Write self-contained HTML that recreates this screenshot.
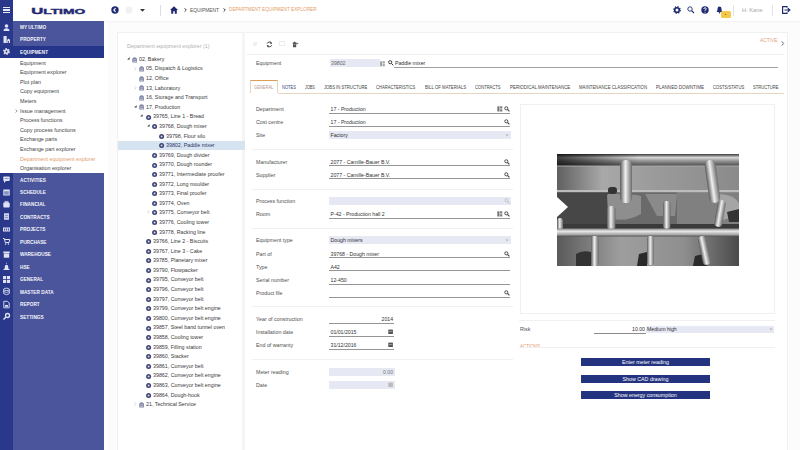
<!DOCTYPE html><html><head><meta charset="utf-8"><style>
*{margin:0;padding:0;box-sizing:border-box}
html,body{width:800px;height:450px;overflow:hidden;background:#fcfcfc;font-family:"Liberation Sans",sans-serif;position:relative}
.a{position:absolute;overflow:visible}
.t{position:absolute;white-space:nowrap;font-size:5.6px;color:#444}
.mm{color:#f4f5fb;font-weight:bold;font-size:5.7px;transform:scaleX(0.83);transform-origin:0 50%}
.sm{color:#444;font-size:5.8px;transform:scaleX(0.925);transform-origin:0 50%}
.tr{color:#333;font-size:5.9px;transform:scaleX(0.9);transform-origin:0 50%}
.lb{color:#505050;font-size:5.3px}
.val{color:#333;font-size:5.2px}
.tab{color:#444;font-size:4.5px}
</style></head><body>
<div class="a" style="left:0;top:0;width:13px;height:450px;background:#2a388c"></div>
<div class="a" style="left:13px;top:0;width:91px;height:450px;background:#4a559b"></div>
<div class="a" style="left:13px;top:0;width:91px;height:21px;background:#fff"></div>
<div class="a" style="left:0;top:46px;width:104px;height:12px;background:#24358a"></div>
<div class="a" style="left:0;top:58px;width:104px;height:115px;background:#fff"></div>
<div class="a" style="left:3px;top:6.8px;width:7.3px;height:1.5px;background:#e8eaf6"></div>
<div class="a" style="left:3px;top:9.2px;width:7.3px;height:1.5px;background:#e8eaf6"></div>
<div class="a" style="left:3px;top:11.6px;width:7.3px;height:1.5px;background:#e8eaf6"></div>
<svg class="a" style="left:0;top:0" width="104" height="21"><text x="31.2" y="13.7" font-family="Liberation Sans" font-weight="bold" fill="#1f2a72" stroke="#1f2a72" stroke-width="0.35" textLength="54" lengthAdjust="spacingAndGlyphs"><tspan font-size="8.2">U</tspan><tspan font-size="6.8">LTIMO</tspan></text></svg>
<div class="t mm" style="left:20px;top:23.00px;line-height:8px;">MY ULTIMO</div>
<svg class="a" style="left:3px;top:23.5px;" width="7" height="7" viewBox="0 0 7 7"><circle cx="3.5" cy="2" r="1.8" fill="#dfe2f3"/><path d="M0.5 7 Q0.5 4.2 3.5 4.2 Q6.5 4.2 6.5 7Z" fill="#dfe2f3"/></svg>
<div class="t mm" style="left:20px;top:35.00px;line-height:8px;">PROPERTY</div>
<svg class="a" style="left:3px;top:35.5px;" width="7" height="7" viewBox="0 0 7 7"><rect x="0.5" y="0" width="3.2" height="7" fill="#dfe2f3"/><path d="M4.2 7 V3.8 L5.6 2.6 L7 3.8 V7Z" fill="#dfe2f3"/><rect x="5.2" y="5" width="0.8" height="2" fill="#2a388c"/></svg>
<div class="t mm" style="left:20px;top:47.60px;line-height:8px;">EQUIPMENT</div>
<svg class="a" style="left:3px;top:48.1px;" width="7" height="7" viewBox="0 0 7 7"><circle cx="3.5" cy="3.5" r="2.5" fill="#dfe2f3"/><circle cx="3.5" cy="3.5" r="2.9" fill="none" stroke="#dfe2f3" stroke-width="1.2" stroke-dasharray="1.52 1.52"/><circle cx="3.5" cy="3.5" r="0.9" fill="#24358a"/></svg>
<div class="t sm" style="left:20px;top:58.50px;line-height:8px;color:#454545">Equipment</div>
<div class="t sm" style="left:20px;top:68.10px;line-height:8px;color:#454545">Equipment explorer</div>
<div class="t sm" style="left:20px;top:77.70px;line-height:8px;color:#454545">Plot plan</div>
<div class="t sm" style="left:20px;top:87.30px;line-height:8px;color:#454545">Copy equipment</div>
<div class="t sm" style="left:20px;top:96.90px;line-height:8px;color:#454545">Meters</div>
<div class="t sm" style="left:20px;top:106.50px;line-height:8px;color:#454545">Issue management</div>
<div class="t sm" style="left:20px;top:116.10px;line-height:8px;color:#454545">Process functions</div>
<div class="t sm" style="left:20px;top:125.70px;line-height:8px;color:#454545">Copy process functions</div>
<div class="t sm" style="left:20px;top:135.30px;line-height:8px;color:#454545">Exchange parts</div>
<div class="t sm" style="left:20px;top:144.90px;line-height:8px;color:#454545">Exchange part explorer</div>
<div class="t sm" style="left:20px;top:154.50px;line-height:8px;color:#e29a6c">Department equipment explorer</div>
<div class="t sm" style="left:20px;top:164.10px;line-height:8px;color:#454545">Organisation explorer</div>
<svg class="a" style="left:15.2px;top:109px;" width="3" height="4" viewBox="0 0 3 4"><path d="M0.7 0.5 L2.2 2 L0.7 3.5" fill="none" stroke="#666" stroke-width="0.7"/></svg>
<div class="t mm" style="left:20px;top:175.50px;line-height:8px;">ACTIVITIES</div>
<svg class="a" style="left:3px;top:176.0px;" width="7" height="7" viewBox="0 0 7 7"><rect x="0.3" y="0.5" width="6.4" height="4.6" rx="0.8" fill="#dfe2f3"/><path d="M1 5 L1 7 L3 5Z" fill="#dfe2f3"/><rect x="1.5" y="2" width="4" height="0.6" fill="#6a74b0"/></svg>
<div class="t mm" style="left:20px;top:187.97px;line-height:8px;">SCHEDULE</div>
<svg class="a" style="left:3px;top:188.5px;" width="7" height="7" viewBox="0 0 7 7"><rect x="0.3" y="0.5" width="6.4" height="6" fill="#dfe2f3"/><rect x="1.2" y="2.2" width="4.6" height="3.5" fill="#8890c0"/></svg>
<div class="t mm" style="left:20px;top:200.44px;line-height:8px;">FINANCIAL</div>
<svg class="a" style="left:3px;top:200.9px;" width="7" height="7" viewBox="0 0 7 7"><rect x="0.3" y="1.5" width="6.4" height="5" rx="1" fill="#dfe2f3"/><rect x="2" y="0.3" width="3" height="1.4" fill="none" stroke="#dfe2f3" stroke-width="0.7"/></svg>
<div class="t mm" style="left:20px;top:212.91px;line-height:8px;">CONTRACTS</div>
<svg class="a" style="left:3px;top:213.4px;" width="7" height="7" viewBox="0 0 7 7"><rect x="1" y="0.2" width="5" height="6.6" fill="#c9cde8"/><rect x="2" y="2" width="3" height="0.6" fill="#6a74b0"/><rect x="2" y="4" width="3" height="0.6" fill="#6a74b0"/></svg>
<div class="t mm" style="left:20px;top:225.38px;line-height:8px;">PROJECTS</div>
<svg class="a" style="left:3px;top:225.9px;" width="7" height="7" viewBox="0 0 7 7"><rect x="0" y="1.5" width="7" height="4" fill="#dfe2f3"/><rect x="1" y="2.5" width="1.2" height="2" fill="#4a559b"/><rect x="3" y="2.5" width="1.2" height="2" fill="#4a559b"/><rect x="5" y="2.5" width="1.2" height="2" fill="#4a559b"/></svg>
<div class="t mm" style="left:20px;top:237.85px;line-height:8px;">PURCHASE</div>
<svg class="a" style="left:3px;top:238.3px;" width="7" height="7" viewBox="0 0 7 7"><path d="M0 0.5 L1.3 0.5 L2.3 4.5 L6 4.5 L6.8 1.5 L1.8 1.5" fill="none" stroke="#dfe2f3" stroke-width="1"/><circle cx="2.6" cy="6" r="0.8" fill="#dfe2f3"/><circle cx="5.4" cy="6" r="0.8" fill="#dfe2f3"/></svg>
<div class="t mm" style="left:20px;top:250.32px;line-height:8px;">WAREHOUSE</div>
<svg class="a" style="left:3px;top:250.8px;" width="7" height="7" viewBox="0 0 7 7"><rect x="0.3" y="0.5" width="6.4" height="1.6" fill="#dfe2f3"/><rect x="0.8" y="2.4" width="5.4" height="4.3" fill="#dfe2f3"/></svg>
<div class="t mm" style="left:20px;top:262.79px;line-height:8px;">HSE</div>
<svg class="a" style="left:3px;top:263.3px;" width="7" height="7" viewBox="0 0 7 7"><path d="M1.5 6 L2 2.5 Q3.5 1 5 2.5 L5.5 6Z" fill="#dfe2f3"/><rect x="0.5" y="6" width="6" height="1" fill="#dfe2f3"/><rect x="3.2" y="-0.3" width="0.6" height="1.2" fill="#dfe2f3"/></svg>
<div class="t mm" style="left:20px;top:275.26px;line-height:8px;">GENERAL</div>
<svg class="a" style="left:3px;top:275.8px;" width="7" height="7" viewBox="0 0 7 7"><rect x="0" y="0" width="3.1" height="3.1" fill="#dfe2f3"/><rect x="3.9" y="0" width="3.1" height="3.1" fill="#dfe2f3"/><rect x="0" y="3.9" width="3.1" height="3.1" fill="#dfe2f3"/><rect x="3.9" y="3.9" width="3.1" height="3.1" fill="#dfe2f3"/></svg>
<div class="t mm" style="left:20px;top:287.73px;line-height:8px;">MASTER DATA</div>
<svg class="a" style="left:3px;top:288.2px;" width="7" height="7" viewBox="0 0 7 7"><ellipse cx="3.5" cy="1.4" rx="2.8" ry="1.2" fill="none" stroke="#dfe2f3" stroke-width="0.9"/><path d="M0.7 1.4 V5.6 Q3.5 7.8 6.3 5.6 V1.4" fill="none" stroke="#dfe2f3" stroke-width="0.9"/><path d="M0.7 3.5 Q3.5 5.5 6.3 3.5" fill="none" stroke="#dfe2f3" stroke-width="0.8"/></svg>
<div class="t mm" style="left:20px;top:300.20px;line-height:8px;">REPORT</div>
<svg class="a" style="left:3px;top:300.7px;" width="7" height="7" viewBox="0 0 7 7"><path d="M0.8 0.3 H4.5 L6.2 2 V6.8 H0.8Z" fill="none" stroke="#dfe2f3" stroke-width="0.9"/><rect x="2" y="4" width="3" height="1.8" fill="#dfe2f3"/></svg>
<div class="t mm" style="left:20px;top:312.67px;line-height:8px;">SETTINGS</div>
<svg class="a" style="left:3px;top:313.2px;" width="7" height="7" viewBox="0 0 7 7"><circle cx="4.5" cy="2.5" r="2" fill="none" stroke="#dfe2f3" stroke-width="1.3"/><path d="M3 4 L0.5 6.5" stroke="#dfe2f3" stroke-width="1.5"/></svg>
<div class="a" style="left:104px;top:0;width:696px;height:21px;background:#fff"></div>
<div class="a" style="left:104px;top:20.5px;width:696px;height:2.5px;background:linear-gradient(#f3f3f3,#fcfcfc)"></div>
<svg class="a" style="left:110.7px;top:6.2px;" width="8" height="8" viewBox="0 0 8 8"><circle cx="4" cy="4" r="3.7" fill="#1f2a72"/><path d="M4.6 2.2 L2.8 4 L4.6 5.8" fill="none" stroke="#fff" stroke-width="1.1"/></svg>
<svg class="a" style="left:125px;top:6.2px;" width="8" height="8" viewBox="0 0 8 8"><circle cx="4" cy="4" r="3.4" fill="#f1f1f1"/></svg>
<svg class="a" style="left:140px;top:9px;" width="5" height="3" viewBox="0 0 5 3"><path d="M0 0 H5 L2.5 2.8Z" fill="#333"/></svg>
<div class="a" style="left:160px;top:5px;width:1px;height:11px;background:#ddd"></div>
<svg class="a" style="left:169.5px;top:6px;" width="8" height="8" viewBox="0 0 8 8"><path d="M4 0.3 L8 4 H6.8 V7.7 H4.8 V5.3 H3.2 V7.7 H1.2 V4 H0Z" fill="#1f2a72"/></svg>
<svg class="a" style="left:183.5px;top:8px;" width="3" height="4" viewBox="0 0 3 4"><path d="M0.6 0.3 L2.3 2 L0.6 3.7" fill="none" stroke="#333" stroke-width="0.95"/></svg>
<div class="t " style="left:190px;top:6.60px;line-height:8px;font-size:4.9px;color:#555">EQUIPMENT</div>
<svg class="a" style="left:222.5px;top:8px;" width="3" height="4" viewBox="0 0 3 4"><path d="M0.6 0.3 L2.3 2 L0.6 3.7" fill="none" stroke="#333" stroke-width="0.95"/></svg>
<div class="t" style="left:229.30px;top:6.40px;line-height:8px;font-size:4.9px;color:#e49c68;transform:scaleX(0.9566);transform-origin:0 0;">DEPARTMENT EQUIPMENT EXPLORER</div>
<svg class="a" style="left:673px;top:6.1px;" width="8" height="8" viewBox="0 0 8 8"><circle cx="4" cy="4" r="2.3" fill="none" stroke="#1f2a72" stroke-width="1.6"/><circle cx="4" cy="4" r="3.2" fill="none" stroke="#1f2a72" stroke-width="1.4" stroke-dasharray="1.25 1.26"/></svg>
<svg class="a" style="left:687px;top:6.1px;" width="8" height="8" viewBox="0 0 8 8"><circle cx="3" cy="3" r="2.2" fill="none" stroke="#1f2a72" stroke-width="0.9"/><path d="M4.6 4.6 L7 7" stroke="#1f2a72" stroke-width="1.1"/></svg>
<svg class="a" style="left:701px;top:6.1px;" width="8" height="8" viewBox="0 0 8 8"><circle cx="4" cy="4" r="3.7" fill="#1f2a72"/><path d="M2.8 3 Q2.8 1.7 4 1.7 Q5.2 1.7 5.2 2.9 Q5.2 3.7 4 4.2 V5" fill="none" stroke="#fff" stroke-width="0.9"/><circle cx="4" cy="6.2" r="0.5" fill="#fff"/></svg>
<svg class="a" style="left:716px;top:5.6px;" width="7" height="8" viewBox="0 0 7 8"><path d="M0.5 6 Q1.5 5 1.5 3 Q1.5 0.6 3.5 0.6 Q5.5 0.6 5.5 3 Q5.5 5 6.5 6Z" fill="#1f2a72"/><circle cx="3.5" cy="6.8" r="0.8" fill="#1f2a72"/></svg>
<div class="a" style="left:720.5px;top:10.5px;width:10.5px;height:7px;border-radius:1.5px;background:#f4c94a"></div>
<div class="a" style="left:725px;top:13.5px;width:1px;height:1px;background:#8a6d10"></div>
<div class="a" style="left:733px;top:5px;width:1px;height:11px;background:#e3e3e3"></div>
<div class="t" style="left:742.30px;top:6.20px;line-height:8px;font-size:5.6px;color:#a8a8a8;transform:scaleX(1.0225);transform-origin:0 0;">H. Kane</div>
<div class="a" style="left:772px;top:5px;width:1px;height:11px;background:#e3e3e3"></div>
<svg class="a" style="left:782px;top:6.1px;" width="9" height="8" viewBox="0 0 9 8"><path d="M5 1.8 V0.6 H0.6 V7.4 H5 V6.2" fill="none" stroke="#1f2a72" stroke-width="1.2"/><path d="M2.5 4 H7.5 M5.8 2.2 L7.8 4 L5.8 5.8" fill="none" stroke="#1f2a72" stroke-width="1.2"/></svg>
<div class="a" style="left:104px;top:22px;width:4px;height:428px;background:#fff"></div>
<div class="a" style="left:117px;top:32px;width:125px;height:418px;background:#fff;border:1px solid #f0f0f0;border-right:none;border-bottom:none"></div><div class="a" style="left:242px;top:32px;width:3px;height:418px;background:#f5f5f5"></div>
<div class="t " style="left:127px;top:41.50px;line-height:8px;font-size:5.3px;color:#b0b0b0">Department equipment explorer (1)</div>
<svg class="a" style="left:127.0px;top:56.9px;" width="3" height="3" viewBox="0 0 3 3"><path d="M2.6 0.2 V2.6 H0.2Z" fill="#333"/></svg>
<svg class="a" style="left:132.4px;top:56.5px;" width="6" height="6" viewBox="0 0 6 6"><path d="M0.3 5.6 V2.2 Q0.3 0.3 2.6 0.3 Q4.9 0.3 4.9 2.2 V5.6Z" fill="#8187a8"/><rect x="1.2" y="2.6" width="2.8" height="0.6" fill="#fff" opacity=".7"/><rect x="1.2" y="4" width="2.8" height="0.6" fill="#fff" opacity=".7"/></svg>
<div class="t tr" style="left:139.4px;top:54.90px;line-height:8px;color:#3a3a3a">02, Bakery</div>
<svg class="a" style="left:133.7px;top:66.5px;" width="3" height="4" viewBox="0 0 3 4"><path d="M0.6 0.3 L2.1 1.8 L0.6 3.3" fill="none" stroke="#bbb" stroke-width="0.6"/></svg>
<svg class="a" style="left:139.1px;top:66.1px;" width="6" height="6" viewBox="0 0 6 6"><path d="M0.3 5.6 V2.2 Q0.3 0.3 2.6 0.3 Q4.9 0.3 4.9 2.2 V5.6Z" fill="#8187a8"/><rect x="1.2" y="2.6" width="2.8" height="0.6" fill="#fff" opacity=".7"/><rect x="1.2" y="4" width="2.8" height="0.6" fill="#fff" opacity=".7"/></svg>
<div class="t tr" style="left:146.1px;top:64.49px;line-height:8px;color:#3a3a3a">05, Dispatch &amp; Logistics</div>
<svg class="a" style="left:139.1px;top:75.7px;" width="6" height="6" viewBox="0 0 6 6"><path d="M0.3 5.6 V2.2 Q0.3 0.3 2.6 0.3 Q4.9 0.3 4.9 2.2 V5.6Z" fill="#8187a8"/><rect x="1.2" y="2.6" width="2.8" height="0.6" fill="#fff" opacity=".7"/><rect x="1.2" y="4" width="2.8" height="0.6" fill="#fff" opacity=".7"/></svg>
<div class="t tr" style="left:146.1px;top:74.08px;line-height:8px;color:#3a3a3a">12, Office</div>
<svg class="a" style="left:133.7px;top:85.7px;" width="3" height="4" viewBox="0 0 3 4"><path d="M0.6 0.3 L2.1 1.8 L0.6 3.3" fill="none" stroke="#bbb" stroke-width="0.6"/></svg>
<svg class="a" style="left:139.1px;top:85.3px;" width="6" height="6" viewBox="0 0 6 6"><path d="M0.3 5.6 V2.2 Q0.3 0.3 2.6 0.3 Q4.9 0.3 4.9 2.2 V5.6Z" fill="#8187a8"/><rect x="1.2" y="2.6" width="2.8" height="0.6" fill="#fff" opacity=".7"/><rect x="1.2" y="4" width="2.8" height="0.6" fill="#fff" opacity=".7"/></svg>
<div class="t tr" style="left:146.1px;top:83.67px;line-height:8px;color:#3a3a3a">13, Laboratory</div>
<svg class="a" style="left:139.1px;top:94.9px;" width="6" height="6" viewBox="0 0 6 6"><path d="M0.3 5.6 V2.2 Q0.3 0.3 2.6 0.3 Q4.9 0.3 4.9 2.2 V5.6Z" fill="#8187a8"/><rect x="1.2" y="2.6" width="2.8" height="0.6" fill="#fff" opacity=".7"/><rect x="1.2" y="4" width="2.8" height="0.6" fill="#fff" opacity=".7"/></svg>
<div class="t tr" style="left:146.1px;top:93.26px;line-height:8px;color:#3a3a3a">16, Storage and Transport</div>
<svg class="a" style="left:133.7px;top:104.8px;" width="3" height="3" viewBox="0 0 3 3"><path d="M2.6 0.2 V2.6 H0.2Z" fill="#333"/></svg>
<svg class="a" style="left:139.1px;top:104.4px;" width="6" height="6" viewBox="0 0 6 6"><path d="M0.3 5.6 V2.2 Q0.3 0.3 2.6 0.3 Q4.9 0.3 4.9 2.2 V5.6Z" fill="#8187a8"/><rect x="1.2" y="2.6" width="2.8" height="0.6" fill="#fff" opacity=".7"/><rect x="1.2" y="4" width="2.8" height="0.6" fill="#fff" opacity=".7"/></svg>
<div class="t tr" style="left:146.1px;top:102.85px;line-height:8px;color:#3a3a3a">17, Production</div>
<svg class="a" style="left:140.4px;top:114.4px;" width="3" height="3" viewBox="0 0 3 3"><path d="M2.6 0.2 V2.6 H0.2Z" fill="#333"/></svg>
<svg class="a" style="left:145.8px;top:114.5px;" width="6" height="6" viewBox="0 0 6 6"><circle cx="2.6" cy="2.6" r="2.5" fill="#3d4476"/><circle cx="2.6" cy="2.6" r="1" fill="#d0d3e6"/></svg>
<div class="t tr" style="left:152.8px;top:112.44px;line-height:8px;color:#3a3a3a">39765, Line 1 - Bread</div>
<svg class="a" style="left:147.0px;top:124.0px;" width="3" height="3" viewBox="0 0 3 3"><path d="M2.6 0.2 V2.6 H0.2Z" fill="#333"/></svg>
<svg class="a" style="left:152.4px;top:124.1px;" width="6" height="6" viewBox="0 0 6 6"><circle cx="2.6" cy="2.6" r="2.5" fill="#3d4476"/><circle cx="2.6" cy="2.6" r="1" fill="#d0d3e6"/></svg>
<div class="t tr" style="left:159.4px;top:122.03px;line-height:8px;color:#3a3a3a">39768, Dough mixer</div>
<svg class="a" style="left:159.1px;top:133.7px;" width="6" height="6" viewBox="0 0 6 6"><circle cx="2.6" cy="2.6" r="2.5" fill="#3d4476"/><circle cx="2.6" cy="2.6" r="1" fill="#d0d3e6"/></svg>
<div class="t tr" style="left:166.1px;top:131.62px;line-height:8px;color:#3a3a3a">39798, Flour silo</div>
<div class="a" style="left:118px;top:140.61px;width:127px;height:9px;background:#d6e3f1"></div>
<svg class="a" style="left:159.1px;top:143.3px;" width="6" height="6" viewBox="0 0 6 6"><circle cx="2.6" cy="2.6" r="2.5" fill="#3d4476"/><circle cx="2.6" cy="2.6" r="1" fill="#d0d3e6"/></svg>
<div class="t tr" style="left:166.1px;top:141.21px;line-height:8px;color:#2a3566">39802, Paddle mixer</div>
<svg class="a" style="left:152.4px;top:152.9px;" width="6" height="6" viewBox="0 0 6 6"><circle cx="2.6" cy="2.6" r="2.5" fill="#3d4476"/><circle cx="2.6" cy="2.6" r="1" fill="#d0d3e6"/></svg>
<div class="t tr" style="left:159.4px;top:150.80px;line-height:8px;color:#3a3a3a">39769, Dough divider</div>
<svg class="a" style="left:152.4px;top:162.5px;" width="6" height="6" viewBox="0 0 6 6"><circle cx="2.6" cy="2.6" r="2.5" fill="#3d4476"/><circle cx="2.6" cy="2.6" r="1" fill="#d0d3e6"/></svg>
<div class="t tr" style="left:159.4px;top:160.39px;line-height:8px;color:#3a3a3a">39770, Dough rounder</div>
<svg class="a" style="left:152.4px;top:172.1px;" width="6" height="6" viewBox="0 0 6 6"><circle cx="2.6" cy="2.6" r="2.5" fill="#3d4476"/><circle cx="2.6" cy="2.6" r="1" fill="#d0d3e6"/></svg>
<div class="t tr" style="left:159.4px;top:169.98px;line-height:8px;color:#3a3a3a">39771, Intermediate proofer</div>
<svg class="a" style="left:152.4px;top:181.7px;" width="6" height="6" viewBox="0 0 6 6"><circle cx="2.6" cy="2.6" r="2.5" fill="#3d4476"/><circle cx="2.6" cy="2.6" r="1" fill="#d0d3e6"/></svg>
<div class="t tr" style="left:159.4px;top:179.57px;line-height:8px;color:#3a3a3a">39772, Long moulder</div>
<svg class="a" style="left:152.4px;top:191.3px;" width="6" height="6" viewBox="0 0 6 6"><circle cx="2.6" cy="2.6" r="2.5" fill="#3d4476"/><circle cx="2.6" cy="2.6" r="1" fill="#d0d3e6"/></svg>
<div class="t tr" style="left:159.4px;top:189.16px;line-height:8px;color:#3a3a3a">39773, Final proofer</div>
<svg class="a" style="left:152.4px;top:200.8px;" width="6" height="6" viewBox="0 0 6 6"><circle cx="2.6" cy="2.6" r="2.5" fill="#3d4476"/><circle cx="2.6" cy="2.6" r="1" fill="#d0d3e6"/></svg>
<div class="t tr" style="left:159.4px;top:198.75px;line-height:8px;color:#3a3a3a">39774, Oven</div>
<svg class="a" style="left:147.0px;top:210.3px;" width="3" height="4" viewBox="0 0 3 4"><path d="M0.6 0.3 L2.1 1.8 L0.6 3.3" fill="none" stroke="#bbb" stroke-width="0.6"/></svg>
<svg class="a" style="left:152.4px;top:210.4px;" width="6" height="6" viewBox="0 0 6 6"><circle cx="2.6" cy="2.6" r="2.5" fill="#3d4476"/><circle cx="2.6" cy="2.6" r="1" fill="#d0d3e6"/></svg>
<div class="t tr" style="left:159.4px;top:208.34px;line-height:8px;color:#3a3a3a">39775, Conveyor belt</div>
<svg class="a" style="left:152.4px;top:220.0px;" width="6" height="6" viewBox="0 0 6 6"><circle cx="2.6" cy="2.6" r="2.5" fill="#3d4476"/><circle cx="2.6" cy="2.6" r="1" fill="#d0d3e6"/></svg>
<div class="t tr" style="left:159.4px;top:217.93px;line-height:8px;color:#3a3a3a">39776, Cooling tower</div>
<svg class="a" style="left:152.4px;top:229.6px;" width="6" height="6" viewBox="0 0 6 6"><circle cx="2.6" cy="2.6" r="2.5" fill="#3d4476"/><circle cx="2.6" cy="2.6" r="1" fill="#d0d3e6"/></svg>
<div class="t tr" style="left:159.4px;top:227.52px;line-height:8px;color:#3a3a3a">39778, Racking line</div>
<svg class="a" style="left:145.8px;top:239.2px;" width="6" height="6" viewBox="0 0 6 6"><circle cx="2.6" cy="2.6" r="2.5" fill="#3d4476"/><circle cx="2.6" cy="2.6" r="1" fill="#d0d3e6"/></svg>
<div class="t tr" style="left:152.8px;top:237.11px;line-height:8px;color:#3a3a3a">39766, Line 2 - Biscuits</div>
<svg class="a" style="left:145.8px;top:248.8px;" width="6" height="6" viewBox="0 0 6 6"><circle cx="2.6" cy="2.6" r="2.5" fill="#3d4476"/><circle cx="2.6" cy="2.6" r="1" fill="#d0d3e6"/></svg>
<div class="t tr" style="left:152.8px;top:246.70px;line-height:8px;color:#3a3a3a">39767, Line 3 - Cake</div>
<svg class="a" style="left:145.8px;top:258.4px;" width="6" height="6" viewBox="0 0 6 6"><circle cx="2.6" cy="2.6" r="2.5" fill="#3d4476"/><circle cx="2.6" cy="2.6" r="1" fill="#d0d3e6"/></svg>
<div class="t tr" style="left:152.8px;top:256.29px;line-height:8px;color:#3a3a3a">39785, Planetary mixer</div>
<svg class="a" style="left:145.8px;top:268.0px;" width="6" height="6" viewBox="0 0 6 6"><circle cx="2.6" cy="2.6" r="2.5" fill="#3d4476"/><circle cx="2.6" cy="2.6" r="1" fill="#d0d3e6"/></svg>
<div class="t tr" style="left:152.8px;top:265.88px;line-height:8px;color:#3a3a3a">39790, Flowpacker</div>
<svg class="a" style="left:145.8px;top:277.6px;" width="6" height="6" viewBox="0 0 6 6"><circle cx="2.6" cy="2.6" r="2.5" fill="#3d4476"/><circle cx="2.6" cy="2.6" r="1" fill="#d0d3e6"/></svg>
<div class="t tr" style="left:152.8px;top:275.47px;line-height:8px;color:#3a3a3a">39795, Conveyor belt</div>
<svg class="a" style="left:145.8px;top:287.2px;" width="6" height="6" viewBox="0 0 6 6"><circle cx="2.6" cy="2.6" r="2.5" fill="#3d4476"/><circle cx="2.6" cy="2.6" r="1" fill="#d0d3e6"/></svg>
<div class="t tr" style="left:152.8px;top:285.06px;line-height:8px;color:#3a3a3a">39796, Conveyor belt</div>
<svg class="a" style="left:145.8px;top:296.8px;" width="6" height="6" viewBox="0 0 6 6"><circle cx="2.6" cy="2.6" r="2.5" fill="#3d4476"/><circle cx="2.6" cy="2.6" r="1" fill="#d0d3e6"/></svg>
<div class="t tr" style="left:152.8px;top:294.65px;line-height:8px;color:#3a3a3a">39797, Conveyor belt</div>
<svg class="a" style="left:145.8px;top:306.3px;" width="6" height="6" viewBox="0 0 6 6"><circle cx="2.6" cy="2.6" r="2.5" fill="#3d4476"/><circle cx="2.6" cy="2.6" r="1" fill="#d0d3e6"/></svg>
<div class="t tr" style="left:152.8px;top:304.24px;line-height:8px;color:#3a3a3a">39799, Conveyor belt engine</div>
<svg class="a" style="left:145.8px;top:315.9px;" width="6" height="6" viewBox="0 0 6 6"><circle cx="2.6" cy="2.6" r="2.5" fill="#3d4476"/><circle cx="2.6" cy="2.6" r="1" fill="#d0d3e6"/></svg>
<div class="t tr" style="left:152.8px;top:313.83px;line-height:8px;color:#3a3a3a">39800, Conveyor belt engine</div>
<svg class="a" style="left:145.8px;top:325.5px;" width="6" height="6" viewBox="0 0 6 6"><circle cx="2.6" cy="2.6" r="2.5" fill="#3d4476"/><circle cx="2.6" cy="2.6" r="1" fill="#d0d3e6"/></svg>
<div class="t tr" style="left:152.8px;top:323.42px;line-height:8px;color:#3a3a3a">39857, Steel band tunnel oven</div>
<svg class="a" style="left:145.8px;top:335.1px;" width="6" height="6" viewBox="0 0 6 6"><circle cx="2.6" cy="2.6" r="2.5" fill="#3d4476"/><circle cx="2.6" cy="2.6" r="1" fill="#d0d3e6"/></svg>
<div class="t tr" style="left:152.8px;top:333.01px;line-height:8px;color:#3a3a3a">39858, Cooling tower</div>
<svg class="a" style="left:145.8px;top:344.7px;" width="6" height="6" viewBox="0 0 6 6"><circle cx="2.6" cy="2.6" r="2.5" fill="#3d4476"/><circle cx="2.6" cy="2.6" r="1" fill="#d0d3e6"/></svg>
<div class="t tr" style="left:152.8px;top:342.60px;line-height:8px;color:#3a3a3a">39859, Filling station</div>
<svg class="a" style="left:145.8px;top:354.3px;" width="6" height="6" viewBox="0 0 6 6"><circle cx="2.6" cy="2.6" r="2.5" fill="#3d4476"/><circle cx="2.6" cy="2.6" r="1" fill="#d0d3e6"/></svg>
<div class="t tr" style="left:152.8px;top:352.19px;line-height:8px;color:#3a3a3a">39860, Stacker</div>
<svg class="a" style="left:145.8px;top:363.9px;" width="6" height="6" viewBox="0 0 6 6"><circle cx="2.6" cy="2.6" r="2.5" fill="#3d4476"/><circle cx="2.6" cy="2.6" r="1" fill="#d0d3e6"/></svg>
<div class="t tr" style="left:152.8px;top:361.78px;line-height:8px;color:#3a3a3a">39861, Conveyor belt</div>
<svg class="a" style="left:145.8px;top:373.5px;" width="6" height="6" viewBox="0 0 6 6"><circle cx="2.6" cy="2.6" r="2.5" fill="#3d4476"/><circle cx="2.6" cy="2.6" r="1" fill="#d0d3e6"/></svg>
<div class="t tr" style="left:152.8px;top:371.37px;line-height:8px;color:#3a3a3a">39862, Conveyor belt engine</div>
<svg class="a" style="left:145.8px;top:383.1px;" width="6" height="6" viewBox="0 0 6 6"><circle cx="2.6" cy="2.6" r="2.5" fill="#3d4476"/><circle cx="2.6" cy="2.6" r="1" fill="#d0d3e6"/></svg>
<div class="t tr" style="left:152.8px;top:380.96px;line-height:8px;color:#3a3a3a">39863, Conveyor belt engine</div>
<svg class="a" style="left:145.8px;top:392.6px;" width="6" height="6" viewBox="0 0 6 6"><circle cx="2.6" cy="2.6" r="2.5" fill="#3d4476"/><circle cx="2.6" cy="2.6" r="1" fill="#d0d3e6"/></svg>
<div class="t tr" style="left:152.8px;top:390.55px;line-height:8px;color:#3a3a3a">39864, Dough-hook</div>
<svg class="a" style="left:133.7px;top:402.1px;" width="3" height="4" viewBox="0 0 3 4"><path d="M0.6 0.3 L2.1 1.8 L0.6 3.3" fill="none" stroke="#bbb" stroke-width="0.6"/></svg>
<svg class="a" style="left:139.1px;top:401.7px;" width="6" height="6" viewBox="0 0 6 6"><path d="M0.3 5.6 V2.2 Q0.3 0.3 2.6 0.3 Q4.9 0.3 4.9 2.2 V5.6Z" fill="#8187a8"/><rect x="1.2" y="2.6" width="2.8" height="0.6" fill="#fff" opacity=".7"/><rect x="1.2" y="4" width="2.8" height="0.6" fill="#fff" opacity=".7"/></svg>
<div class="t tr" style="left:146.1px;top:400.14px;line-height:8px;color:#3a3a3a">21, Technical Service</div>
<div class="a" style="left:245px;top:32px;width:543px;height:418px;background:#fff;border:1px solid #f0f0f0;border-bottom:none;border-left:none"></div>
<div class="t " style="left:760px;top:36.50px;line-height:8px;font-size:4.8px;color:#dfa27c">ACTIVE</div>
<svg class="a" style="left:780.5px;top:40.5px;" width="4" height="5" viewBox="0 0 4 5"><path d="M0.7 0.4 L2.7 2.5 L0.7 4.6" fill="none" stroke="#555" stroke-width="0.9"/></svg>
<svg class="a" style="left:252px;top:41px;" width="6" height="6" viewBox="0 0 6 6"><path d="M1 5 L5 1" stroke="#e4e4e4" stroke-width="1"/><circle cx="3" cy="3" r="2" fill="#eee"/></svg>
<svg class="a" style="left:265.5px;top:41px;" width="7" height="7" viewBox="0 0 7 7"><path d="M5.6 2.2 A2.6 2.6 0 0 0 1 2.6" fill="none" stroke="#333" stroke-width="0.9"/><path d="M1.2 4.6 A2.6 2.6 0 0 0 5.8 4.2" fill="none" stroke="#333" stroke-width="0.9"/><path d="M4.6 0.6 L6.2 2.6 L4 2.8Z" fill="#333"/><path d="M2.2 6.4 L0.6 4.4 L2.8 4.2Z" fill="#333"/></svg>
<div class="a" style="left:279px;top:41px;width:6px;height:5px;border:0.8px solid #ececec"></div>
<svg class="a" style="left:292px;top:40.5px;" width="7" height="7" viewBox="0 0 7 7"><path d="M2.6 0.5 L5 2.4 H4.2 V6.3 H1 V2.4 H0.2Z" fill="#555"/><path d="M4.5 1.6 L6.6 2.6 L4.5 3.6Z" fill="#555"/><rect x="1.6" y="3.4" width="2" height="0.5" fill="#ddd"/></svg>
<div class="a" style="left:246px;top:54px;width:538px;height:1px;background:#f0f0f0"></div>
<div class="t lb" style="left:256px;top:59.10px;line-height:8px;">Equipment</div>
<div class="a" style="left:330px;top:58.8px;width:49.5px;height:8.2px;background:#e6e8f3"></div>
<div class="t val" style="left:331px;top:59.30px;line-height:8px;color:#666">39802</div>
<svg class="a" style="left:380px;top:60.5px;" width="6" height="6" viewBox="0 0 6 6"><rect x="0.2" y="0.3" width="2" height="5" fill="#999"/><rect x="2.8" y="0.3" width="2" height="2.1" fill="#999"/><rect x="2.8" y="3.2" width="2" height="2.1" fill="#999"/></svg>
<svg class="a" style="left:387.5px;top:60.2px;" width="6" height="6" viewBox="0 0 6 6"><circle cx="2.2" cy="2.2" r="1.6" fill="none" stroke="#333" stroke-width="0.9"/><path d="M3.4 3.4 L5.3 5.3" stroke="#333" stroke-width="1"/></svg>
<div class="a" style="left:394px;top:66.8px;width:384px;height:1px;background:#a0a0a0"></div>
<div class="t val" style="left:395px;top:58.80px;line-height:8px;">Paddle mixer</div>
<div class="a" style="left:249.5px;top:80px;width:28.5px;height:13px;border:0.8px solid #e6d2bf;border-top:1.4px solid #d9a05a;border-bottom:none;background:#fff"></div>
<div class="a" style="left:278px;top:92.6px;width:506px;height:1px;background:#e6d6bf"></div>
<div class="t" style="left:253.60px;top:83.80px;line-height:8px;font-size:4.6px;color:#b09a90;transform:scaleX(0.8823);transform-origin:0 0;">GENERAL</div>
<div class="t" style="left:282.00px;top:83.80px;line-height:8px;font-size:4.6px;color:#3b4680;transform:scaleX(0.8834);transform-origin:0 0;">NOTES</div>
<div class="t" style="left:305.40px;top:83.80px;line-height:8px;font-size:4.6px;color:#444;transform:scaleX(0.8246);transform-origin:0 0;">JOBS</div>
<div class="t" style="left:324.30px;top:83.80px;line-height:8px;font-size:4.6px;color:#444;transform:scaleX(0.9129);transform-origin:0 0;">JOBS IN STRUCTURE</div>
<div class="t" style="left:376.30px;top:83.80px;line-height:8px;font-size:4.6px;color:#444;transform:scaleX(0.9022);transform-origin:0 0;">CHARACTERISTICS</div>
<div class="t" style="left:424.50px;top:83.80px;line-height:8px;font-size:4.6px;color:#444;transform:scaleX(0.9369);transform-origin:0 0;">BILL OF MATERIALS</div>
<div class="t" style="left:475.40px;top:83.80px;line-height:8px;font-size:4.6px;color:#444;transform:scaleX(0.8947);transform-origin:0 0;">CONTRACTS</div>
<div class="t" style="left:509.60px;top:83.80px;line-height:8px;font-size:4.6px;color:#444;transform:scaleX(0.9673);transform-origin:0 0;">PERIODICAL MAINTENANCE</div>
<div class="t" style="left:579.40px;top:83.80px;line-height:8px;font-size:4.6px;color:#444;transform:scaleX(0.9427);transform-origin:0 0;">MAINTENANCE CLASSIFICATION</div>
<div class="t" style="left:656.00px;top:83.80px;line-height:8px;font-size:4.6px;color:#444;transform:scaleX(0.9886);transform-origin:0 0;">PLANNED DOWNTIME</div>
<div class="t" style="left:712.50px;top:83.80px;line-height:8px;font-size:4.6px;color:#444;transform:scaleX(0.9019);transform-origin:0 0;">COSTS/STATUS</div>
<div class="t" style="left:752.50px;top:83.80px;line-height:8px;font-size:4.6px;color:#444;transform:scaleX(0.8992);transform-origin:0 0;">STRUCTURE</div>
<div class="t lb" style="left:256px;top:105.40px;line-height:8px;">Department</div>
<div class="a" style="left:329px;top:112.7px;width:181px;height:0.9px;background:#959595"></div>
<div class="t val" style="left:330.5px;top:105.00px;line-height:8px;">17 - Production</div>
<svg class="a" style="left:503.5px;top:106px;" width="6" height="6" viewBox="0 0 6 6"><circle cx="2.3" cy="2.3" r="1.55" fill="none" stroke="#444" stroke-width="0.95"/><path d="M3.4 3.4 L5.4 5.4" stroke="#444" stroke-width="1.2"/></svg>
<svg class="a" style="left:496.5px;top:106px;" width="6" height="6" viewBox="0 0 6 6"><rect x="0.3" y="0.3" width="2.2" height="5.2" fill="#777"/><rect x="3.1" y="0.3" width="2.2" height="2.2" fill="#777"/><rect x="3.1" y="3.3" width="2.2" height="2.2" fill="#777"/></svg>
<div class="t lb" style="left:256px;top:118.40px;line-height:8px;">Cost centre</div>
<div class="a" style="left:329px;top:125.7px;width:181px;height:0.9px;background:#959595"></div>
<div class="t val" style="left:330.5px;top:118.00px;line-height:8px;">17 - Production</div>
<svg class="a" style="left:503.5px;top:119px;" width="6" height="6" viewBox="0 0 6 6"><circle cx="2.3" cy="2.3" r="1.55" fill="none" stroke="#444" stroke-width="0.95"/><path d="M3.4 3.4 L5.4 5.4" stroke="#444" stroke-width="1.2"/></svg>
<div class="t lb" style="left:256px;top:131.40px;line-height:8px;">Site</div>
<div class="a" style="left:329px;top:130.7px;width:181.5px;height:8.3px;background:#e6e8f3"></div>
<div class="t val" style="left:330.5px;top:131.00px;line-height:8px;">Factory</div>
<svg class="a" style="left:504.5px;top:134px;" width="5" height="3" viewBox="0 0 5 3"><path d="M0.3 0.4 H3.7 L2 2.2Z" fill="#b4b4b4"/></svg>
<div class="t lb" style="left:256px;top:157.90px;line-height:8px;">Manufacturer</div>
<div class="a" style="left:329px;top:165.2px;width:181px;height:0.9px;background:#959595"></div>
<div class="t val" style="left:330.5px;top:157.50px;line-height:8px;">2077 - Camille-Bauer B.V.</div>
<svg class="a" style="left:503.5px;top:158.5px;" width="6" height="6" viewBox="0 0 6 6"><circle cx="2.3" cy="2.3" r="1.55" fill="none" stroke="#444" stroke-width="0.95"/><path d="M3.4 3.4 L5.4 5.4" stroke="#444" stroke-width="1.2"/></svg>
<div class="t lb" style="left:256px;top:170.90px;line-height:8px;">Supplier</div>
<div class="a" style="left:329px;top:178.2px;width:181px;height:0.9px;background:#959595"></div>
<div class="t val" style="left:330.5px;top:170.50px;line-height:8px;">2077 - Camille-Bauer B.V.</div>
<svg class="a" style="left:503.5px;top:171.5px;" width="6" height="6" viewBox="0 0 6 6"><circle cx="2.3" cy="2.3" r="1.55" fill="none" stroke="#444" stroke-width="0.95"/><path d="M3.4 3.4 L5.4 5.4" stroke="#444" stroke-width="1.2"/></svg>
<div class="t lb" style="left:256px;top:197.40px;line-height:8px;">Process function</div>
<div class="a" style="left:329px;top:196.7px;width:181.5px;height:8.3px;background:#e6e8f3"></div>
<svg class="a" style="left:503.5px;top:198px;" width="6" height="6" viewBox="0 0 6 6"><circle cx="2.3" cy="2.3" r="1.55" fill="none" stroke="#c4c4c4" stroke-width="0.95"/><path d="M3.4 3.4 L5.4 5.4" stroke="#c4c4c4" stroke-width="1.2"/></svg>
<div class="t lb" style="left:256px;top:210.40px;line-height:8px;">Room</div>
<div class="a" style="left:329px;top:217.7px;width:181px;height:0.9px;background:#959595"></div>
<div class="t val" style="left:330.5px;top:210.00px;line-height:8px;">P-42 - Production hall 2</div>
<svg class="a" style="left:503.5px;top:211px;" width="6" height="6" viewBox="0 0 6 6"><circle cx="2.3" cy="2.3" r="1.55" fill="none" stroke="#444" stroke-width="0.95"/><path d="M3.4 3.4 L5.4 5.4" stroke="#444" stroke-width="1.2"/></svg>
<svg class="a" style="left:496.5px;top:211px;" width="6" height="6" viewBox="0 0 6 6"><rect x="0.3" y="0.3" width="2.2" height="5.2" fill="#777"/><rect x="3.1" y="0.3" width="2.2" height="2.2" fill="#777"/><rect x="3.1" y="3.3" width="2.2" height="2.2" fill="#777"/></svg>
<div class="t lb" style="left:256px;top:236.40px;line-height:8px;">Equipment type</div>
<div class="a" style="left:329px;top:235.7px;width:181.5px;height:8.3px;background:#e6e8f3"></div>
<div class="t val" style="left:330.5px;top:236.00px;line-height:8px;">Dough mixers</div>
<svg class="a" style="left:504.5px;top:239px;" width="5" height="3" viewBox="0 0 5 3"><path d="M0.3 0.4 H3.7 L2 2.2Z" fill="#b4b4b4"/></svg>
<div class="t lb" style="left:256px;top:249.90px;line-height:8px;">Part of</div>
<div class="a" style="left:329px;top:257.2px;width:181px;height:0.9px;background:#959595"></div>
<div class="t val" style="left:330.5px;top:249.50px;line-height:8px;">39768 - Dough mixer</div>
<svg class="a" style="left:503.5px;top:250.5px;" width="6" height="6" viewBox="0 0 6 6"><circle cx="2.3" cy="2.3" r="1.55" fill="none" stroke="#444" stroke-width="0.95"/><path d="M3.4 3.4 L5.4 5.4" stroke="#444" stroke-width="1.2"/></svg>
<div class="t lb" style="left:256px;top:262.90px;line-height:8px;">Type</div>
<div class="a" style="left:329px;top:270.2px;width:181px;height:0.9px;background:#959595"></div>
<div class="t val" style="left:330.5px;top:262.50px;line-height:8px;">A42</div>
<div class="t lb" style="left:256px;top:276.40px;line-height:8px;">Serial number</div>
<div class="a" style="left:329px;top:283.7px;width:181px;height:0.9px;background:#959595"></div>
<div class="t val" style="left:330.5px;top:276.00px;line-height:8px;">12-450</div>
<div class="t lb" style="left:256px;top:289.40px;line-height:8px;">Product file</div>
<div class="a" style="left:329px;top:296.7px;width:181px;height:0.9px;background:#959595"></div>
<svg class="a" style="left:503.5px;top:290px;" width="6" height="6" viewBox="0 0 6 6"><circle cx="2.3" cy="2.3" r="1.55" fill="none" stroke="#444" stroke-width="0.95"/><path d="M3.4 3.4 L5.4 5.4" stroke="#444" stroke-width="1.2"/></svg>
<div class="a" style="left:252px;top:149px;width:261px;height:0.8px;background:#f0f0f0"></div>
<div class="a" style="left:252px;top:188.5px;width:261px;height:0.8px;background:#f0f0f0"></div>
<div class="a" style="left:252px;top:227.5px;width:261px;height:0.8px;background:#f0f0f0"></div>
<div class="a" style="left:252px;top:306px;width:261px;height:0.8px;background:#f0f0f0"></div>
<div class="a" style="left:252px;top:358.5px;width:261px;height:0.8px;background:#f0f0f0"></div>
<div class="t lb" style="left:256px;top:315.40px;line-height:8px;">Year of construction</div>
<div class="a" style="left:329px;top:322.7px;width:65px;height:0.9px;background:#959595"></div>
<div class="t val" style="left:381.5px;top:315.00px;line-height:8px;">2014</div>
<div class="t lb" style="left:256px;top:328.40px;line-height:8px;">Installation date</div>
<div class="a" style="left:329px;top:335.7px;width:65px;height:0.9px;background:#959595"></div>
<div class="t val" style="left:330.5px;top:328.00px;line-height:8px;">01/01/2015</div>
<div class="t lb" style="left:256px;top:341.40px;line-height:8px;">End of warranty</div>
<div class="a" style="left:329px;top:348.7px;width:65px;height:0.9px;background:#959595"></div>
<div class="t val" style="left:330.5px;top:341.00px;line-height:8px;">31/12/2016</div>
<svg class="a" style="left:387.5px;top:329.2px;" width="6" height="6" viewBox="0 0 6 6"><rect x="0.3" y="0.6" width="4.6" height="4.4" fill="#555"/><rect x="0.9" y="2" width="3.4" height="0.5" fill="#ddd"/></svg>
<svg class="a" style="left:387.5px;top:342.2px;" width="6" height="6" viewBox="0 0 6 6"><rect x="0.3" y="0.6" width="4.6" height="4.4" fill="#555"/><rect x="0.9" y="2" width="3.4" height="0.5" fill="#ddd"/></svg>
<div class="t lb" style="left:256px;top:368.40px;line-height:8px;">Meter reading</div>
<div class="a" style="left:329px;top:367.7px;width:65.5px;height:8.3px;background:#e6e8f3"></div>
<div class="t val" style="left:383px;top:368.00px;line-height:8px;color:#777">0.00</div>
<div class="t lb" style="left:256px;top:381.40px;line-height:8px;">Date</div>
<div class="a" style="left:329px;top:380.7px;width:65.5px;height:8.3px;background:#e6e8f3"></div>
<svg class="a" style="left:387.5px;top:382.2px;" width="6" height="6" viewBox="0 0 6 6"><rect x="0.3" y="0.6" width="4.6" height="4.4" fill="#bbb"/></svg>
<div class="a" style="left:519.5px;top:104px;width:255px;height:210px;border:1px solid #f0f0f0"></div>
<svg class="a" style="left:557px;top:154px;" width="182" height="112" viewBox="0 0 182 112">
<defs>
<linearGradient id="topb" x1="0" y1="0" x2="0" y2="1"><stop offset="0" stop-color="#3a3a3a"/><stop offset=".3" stop-color="#d8d8d8"/><stop offset=".55" stop-color="#9a9a9a"/><stop offset="1" stop-color="#4a4a4a"/></linearGradient>
<linearGradient id="topl" x1="0" y1="0" x2="1" y2="0"><stop offset="0" stop-color="#000" stop-opacity=".7"/><stop offset=".45" stop-color="#000" stop-opacity="0"/></linearGradient>
<linearGradient id="bar" x1="0" y1="0" x2="0" y2="1"><stop offset="0" stop-color="#888"/><stop offset=".35" stop-color="#e8e8e8"/><stop offset=".75" stop-color="#a8a8a8"/><stop offset="1" stop-color="#555"/></linearGradient>
<linearGradient id="peg" x1="0" y1="0" x2="1" y2="0"><stop offset="0" stop-color="#5a5a5a"/><stop offset=".45" stop-color="#f0f0f0"/><stop offset="1" stop-color="#6a6a6a"/></linearGradient>
<linearGradient id="pan" x1="0" y1="0" x2="1" y2="0"><stop offset="0" stop-color="#606060"/><stop offset=".25" stop-color="#a8a8a8"/><stop offset=".55" stop-color="#9a9a9a"/><stop offset="1" stop-color="#8a8a8a"/></linearGradient>
<linearGradient id="bot" x1="0" y1="0" x2="1" y2="0"><stop offset="0" stop-color="#5a5a5a"/><stop offset=".35" stop-color="#9e9e9e"/><stop offset=".7" stop-color="#8e8e8e"/><stop offset="1" stop-color="#4a4a4a"/></linearGradient>
</defs>
<rect width="182" height="112" fill="#3a3a3a"/>
<rect y="12" width="182" height="24" fill="url(#pan)"/>
<rect y="38" width="182" height="36" fill="#6a6a6a"/><rect y="38" width="52" height="34" fill="#474747"/>
<rect x="120" y="38" width="62" height="34" fill="#808080"/>
<rect y="82" width="182" height="30" fill="url(#bot)"/>
<rect y="0" width="182" height="12" fill="url(#topb)"/>
<rect y="0" width="182" height="12" fill="url(#topl)"/>
<rect y="11.5" width="182" height="1" fill="#aaa"/>
<rect y="36" width="182" height="2.2" fill="#bdbdbd"/>
<path d="M50 41 Q52 38 60 40 L80 41 L84 42 L84 60 Q70 68 56 65 L51 60Z" fill="#8e8e8e"/>
<path d="M88 40 L120 40 L118 62 L100 62Z" fill="#8a8a8a"/>
<path d="M160 40 Q178 40 182 50 L182 62 L165 66Z" fill="#a5a5a5"/>
<path d="M170 58 L182 55 L182 68 L172 68Z" fill="#333"/>
<rect x="51" y="33" width="9" height="7" rx="3" fill="#333"/>
<rect x="0" y="70" width="182" height="4" fill="#3a3a3a"/>
<rect x="63" y="6" width="12" height="43" rx="5.5" fill="url(#peg)"/>
<rect x="150" y="6" width="11" height="43" rx="5" fill="url(#peg)" transform="rotate(-8 155 28)"/>
<rect x="106" y="47" width="7.5" height="28" rx="3.5" fill="url(#peg)"/>
<rect x="50" y="52" width="8.5" height="24" rx="4" fill="url(#peg)"/>
<rect x="159" y="46" width="8" height="27" rx="4" fill="url(#peg)" transform="rotate(10 163 60)"/>
<rect x="0" y="64" width="6" height="13" rx="3" fill="url(#peg)"/>
<rect y="74.5" width="182" height="8" fill="url(#bar)"/>
<path d="M19 100 Q25 96 34 98 L34 112 L19 112Z" fill="#333"/>
<path d="M82 100 L90 98 L90 112 L80 112Z" fill="#2a2a2a"/>
<path d="M138 102 L146 100 L150 112 L136 112Z" fill="#2a2a2a"/>
<rect x="34" y="82" width="7.5" height="30" rx="3" fill="url(#peg)"/>
<rect x="90" y="82" width="7" height="29" rx="3" fill="url(#peg)"/>
<rect x="143" y="82" width="8" height="29" rx="3" fill="url(#peg)" transform="rotate(-12 147 95)"/>
<path d="M0 43 L11 53 L0 63Z" fill="#fff"/>
</svg>
<div class="t lb" style="left:520px;top:325.00px;line-height:8px;">Risk</div>
<div class="a" style="left:594px;top:332.5px;width:52px;height:0.9px;background:#8a8a8a"></div>
<div class="t val" style="left:632px;top:325.00px;line-height:8px;">10.00</div>
<div class="a" style="left:646px;top:325.5px;width:128px;height:7.5px;background:#e6e8f3"></div>
<div class="t val" style="left:647px;top:325.00px;line-height:8px;">Medium high</div>
<svg class="a" style="left:769px;top:328px;" width="5" height="3" viewBox="0 0 5 3"><path d="M0.3 0.4 H3.7 L2 2.2Z" fill="#b4b4b4"/></svg>
<div class="t " style="left:520px;top:342.80px;line-height:8px;font-size:4.5px;color:#df9c6c">ACTIONS</div>
<div class="a" style="left:519px;top:319.5px;width:256px;height:0.8px;background:#f0f0f0"></div>
<div class="a" style="left:519px;top:347px;width:256px;height:0.8px;background:#f0f0f0"></div>
<div class="a" style="left:581px;top:358.0px;width:129px;height:8px;background:#243380;color:#fff;font-size:5.3px;line-height:8px;text-align:center">Enter meter reading</div>
<div class="a" style="left:581px;top:374.6px;width:129px;height:8px;background:#243380;color:#fff;font-size:5.3px;line-height:8px;text-align:center">Show CAD drawing</div>
<div class="a" style="left:581px;top:391.2px;width:129px;height:8px;background:#243380;color:#fff;font-size:5.3px;line-height:8px;text-align:center">Show energy consumption</div>
</body></html>
